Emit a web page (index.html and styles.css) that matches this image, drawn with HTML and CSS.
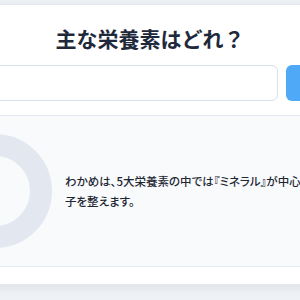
FILE: index.html
```html
<!DOCTYPE html>
<html lang="ja">
<head>
<meta charset="utf-8">
<link rel="stylesheet" href="styles.css">
</head>
<body>
<main class="card">
  <h1 class="title">主な栄養素はどれ？</h1>
  <div class="answer-row">
    <input class="answer-input" type="text" aria-label="回答">
    <button class="answer-btn" type="button"></button>
  </div>
  <section class="result">
    <svg class="donut" width="114" height="114" viewBox="0 0 114 114" aria-hidden="true">
      <circle cx="57" cy="57" r="46" fill="none" stroke="#e3e8f0" stroke-width="22"/>
    </svg>
    <p class="desc">わかめは、5大栄養素の中では『ミネラル』が中心となる食品で、体の調<br>子を整えます。</p>
  </section>
</main>
</body>
</html>
```
FILE: styles.css
```css
* { box-sizing: border-box; }
html, body { margin: 0; padding: 0; }
body {
  background: #eef1f5;
  font-family: "Noto Sans CJK JP", "Noto Sans", sans-serif;
  overflow: hidden;
  height: 300px;
}
.card {
  width: 500px;
  margin: 4px 0 0 -100px;
  background: #ffffff;
  border: 1px solid #e4e9f0;
  box-shadow: 0 3px 10px rgba(30, 41, 59, 0.07);
  padding: 19px 18px 17px;
}
.title {
  margin: 0;
  font-size: 21px;
  line-height: 28px;
  font-weight: 700;
  color: #1e293b;
  text-align: center;
}
.answer-row {
  display: flex;
  gap: 8px;
  margin-top: 13px;
}
.answer-input {
  flex: 1;
  height: 36px;
  border: 1px solid #d7e0ed;
  border-radius: 6px;
  background: #fff;
  font: inherit;
}
.answer-btn {
  width: 95px;
  height: 36px;
  border: none;
  border-radius: 6px;
  background: #4fa9f6;
}
.result {
  margin-top: 14px;
  display: flex;
  align-items: center;
  gap: 13px;
  padding: 18px;
  background: #f8fafc;
  border: 1px solid #e6ebf1;
}
.donut { flex: none; display: block; }
.desc {
  flex: none;
  width: 420px;
  margin: 0;
  font-size: 11.5px;
  line-height: 20px;
  font-weight: 500;
  color: #1f2733;
  font-feature-settings: "palt";
}
```
